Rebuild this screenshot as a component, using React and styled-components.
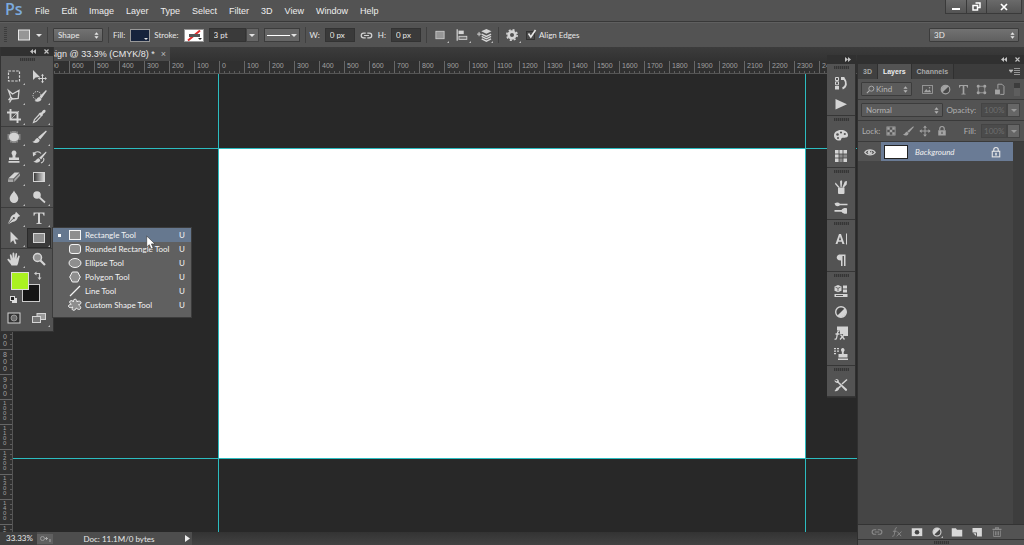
import React, { useState } from "react";
import styled, { createGlobalStyle, css } from "styled-components";

const icons = {
  marquee: (
    <rect x="2.5" y="3" width="11" height="10" fill="none" stroke="currentColor" strokeWidth="1.2" strokeDasharray="2.600 1.200" />
  ),
  move: (
    <>
      <path d="M2 2v10l2.600-2.400L9 9z" fill="currentColor" />
      <path d="M11.500 7v7M8 10.500h7" stroke="currentColor" strokeWidth="1" />
      <path d="M11.500 5.800l1.500 2h-3zM11.500 15.200l1.500-2h-3zM6.800 10.500l2-1.500v3zM16 10.500L14 9v3z" fill="currentColor" />
    </>
  ),
  lasso: (
    <path d="M2.500 2.500l4 3.500 6.500-3.500-.8 8-5.700.5-1.800-2.200L2.500 2.500zM4.800 9.200L3 11.500l2 .5-1.500 2.500M5 11l3 .2" fill="none" stroke="currentColor" strokeWidth="1.300" />
  ),
  quickSelect: (
    <>
      <circle cx="6" cy="7.500" r="4" fill="none" stroke="currentColor" strokeDasharray="1.300 1" />
      <path d="M15 2L8.500 8.500l2 2L15.800 3zM8.500 9c-2.500 0-2.500 3-5 3.800 2.500 1.800 6.500 1 7-1.800z" fill="currentColor" />
    </>
  ),
  crop: (
    <>
      <path d="M4.500 1v10.500H15M1 4.500h10.500V15" fill="none" stroke="currentColor" strokeWidth="1.900" />
      <path d="M5 11L13 3" stroke="currentColor" strokeWidth=".7" />
    </>
  ),
  dropper: (
    <>
      <path d="M8.800 4.800l1.500-.2 1.700-2.300c1.800-1.500 3.600.2 2 2.100L11.900 6l-.2 1.600-1.200 1.200-3-2.800z" fill="currentColor" />
      <path d="M8.300 6.500L3.500 11.500l-1 3 2.800-1.200 4.600-4.900" fill="none" stroke="currentColor" strokeWidth="1.200" />
    </>
  ),
  patch: (
    <>
      <ellipse cx="8" cy="8" rx="5" ry="4.200" fill="currentColor" />
      <path d="M5 2.500v11M7 2v12M9 2v12M11 2.500v11M1.500 6h13M1.500 8h13M1.500 10h13" stroke="currentColor" strokeWidth=".8" />
    </>
  ),
  brush: (
    <path d="M15 1.500L7 8.200l2.200 2.200L15.800 2.500zM6.800 9c-2.600 0-2.300 3.400-5.500 3.700 2.600 2.200 7.200 1.400 7.400-1.800z" fill="currentColor" />
  ),
  stamp: (
    <path d="M8 1.500a2.500 2.500 0 0 1 2 4c-.7 1-.6 2-.5 3H13v2.500H3V8.500h3.500c.1-1 .2-2-.5-3a2.500 2.500 0 0 1 2-4zM2.500 12h11v1.700h-11z" fill="currentColor" />
  ),
  historyBrush: (
    <>
      <path d="M15 2.500L8.200 8.700l1.900 1.700L15.500 3.500zM7.800 9.300c-2.500 0-2.300 3-5.500 3.300 2.400 1.900 6.600 1.200 7-1.700z" fill="currentColor" />
      <path d="M2.500 4.500c3-2.500 6-2 7.500 0M12.500 9c1 2 0 4-2.500 5" fill="none" stroke="currentColor" strokeWidth="1.100" />
      <path d="M2 7.500L1.800 3 5.500 5z" fill="currentColor" />
    </>
  ),
  eraser: (
    <>
      <path d="M8.500 3.500h5l-6 6H2.200z" fill="currentColor" />
      <path d="M14 4.200v2.500l-5.800 6.300v-3zM2 10.200h5.300V13H2z" fill="#a4a4a4" />
    </>
  ),
  gradient: (
    <>
      <defs>
        <linearGradient id="toolGradient">
          <stop offset="0" stopColor="#333" />
          <stop offset="1" stopColor="#ddd" />
        </linearGradient>
      </defs>
      <rect x="2.500" y="3.500" width="11" height="9" fill="url(#toolGradient)" stroke="currentColor" />
    </>
  ),
  drop: (
    <path d="M8 1.500c1 2.500 4.300 5 4.300 8.100a4.300 4.300 0 0 1-8.600 0C3.700 6.500 7 4 8 1.500z" fill="currentColor" />
  ),
  dodge: (
    <>
      <circle cx="6" cy="6" r="3.800" fill="currentColor" />
      <path d="M8.500 8.500l5.500 5" stroke="currentColor" strokeWidth="1.700" />
    </>
  ),
  pen: (
    <>
      <path d="M10 1.800l4.200 4.200-2.200 1c-.8 3-2.500 4.500-5.500 5L2 14.300l5-5-.6-.6-4.700 5L4 9.500C4.500 6.500 6 4.800 9 4z" fill="currentColor" />
      <circle cx="7.800" cy="8.200" r="1.100" fill="#535353" />
    </>
  ),
  type: (
    <path d="M2.500 2.500h11v3.300h-.9c-.3-1.600-.8-2.200-2.200-2.200H9v8.600c0 .8.4 1 1.600 1v.8H5.400v-.8c1.200 0 1.600-.2 1.600-1V3.600H5.600c-1.400 0-1.900.6-2.200 2.200h-.9z" fill="currentColor" />
  ),
  select: <path d="M4.500 1.500v11.200l2.700-2.500 1.700 4 1.600-.7-1.700-3.900h3.700z" fill="currentColor" />,
  rect: (
    <rect x="2.500" y="3.500" width="11" height="9" fill="#8e8e8e" stroke="currentColor" />
  ),
  hand: (
    <path d="M5.500 14.500C4.500 12.500 3 11 1.500 9c-.5-1 .8-1.700 1.700-.8l1.500 1.300L3.800 4c0-1 1.300-1.200 1.600-.2L6.500 7.500V2.500c0-1.200 1.700-1.200 1.800 0l.3 4.800.9-4.500c.3-1.100 1.700-.9 1.600.2l-.4 4.900 1.500-3c.5-.9 1.800-.4 1.500.6-.8 2.500-.9 6-2.500 9z" fill="currentColor" />
  ),
  zoom: (
    <>
      <circle cx="6.500" cy="6.500" r="4" fill="#929292" stroke="currentColor" strokeWidth="1.500" />
      <path d="M9.500 9.500l4.500 4.500" stroke="currentColor" strokeWidth="2.200" />
    </>
  ),
  quickMask: (
    <>
      <rect x="2" y="3" width="12" height="10" fill="#333" stroke="currentColor" />
      <circle cx="8" cy="8" r="3" fill="#6c6c6c" stroke="#aaa" strokeWidth=".8" />
    </>
  ),
  screenMode: (
    <>
      <rect x="6" y="3.500" width="8.500" height="6" fill="#999" stroke="currentColor" />
      <rect x="1.500" y="6.500" width="8" height="6" fill="#777" stroke="currentColor" />
    </>
  ),
  rounded: (
    <rect x="2.500" y="3.500" width="11" height="9" rx="2.500" fill="#8e8e8e" stroke="currentColor" />
  ),
  ellipse: <ellipse cx="8" cy="8" rx="6" ry="4.500" fill="#8e8e8e" stroke="currentColor" />,
  polygon: <path d="M5.300 3h5.400l2.600 5-2.600 5H5.300L2.700 8z" fill="#8e8e8e" stroke="currentColor" />,
  line: <path d="M3 13L13 3" stroke="currentColor" strokeWidth="1.300" />,
  custom: (
    <path d="M7 2.500c2-1 3 .5 2.800 2.200 1.700-1 4.200-.8 4.200 1 0 1.500-1.500 1.800-2.500 2 1 1 3 2.500 2 4s-3 .5-4.200-.7c-.6 1.500-2 3-3.600 2-1.200-.8-.3-2.200.2-3-1.500.8-3.800 1-4.400-.5C1 8 3 7.500 4.300 7.200 3 6.500 2 5 3.200 4s2.800.2 3.400 1C6.500 4 6 3 7 2.500z" fill="#8e8e8e" stroke="currentColor" />
  ),
  history: (
    <>
      <path d="M2.500 2.500h3v3h-3zM2.500 6.800h3v3h-3z" fill="none" stroke="currentColor" />
      <path d="M2 11h4v3.500H2zM8 2h3.500v3H8z" fill="currentColor" />
      <path d="M9.500 13.500c4-1.500 4.500-6 1.500-10" fill="none" stroke="currentColor" strokeWidth="1.900" />
    </>
  ),
  play: <path d="M2.500 3v10.500L14 8.200z" fill="currentColor" />,
  palette: (
    <>
      <path d="M8 3C4 3 1 5.300 1 8.500S3.800 14 7 13.500c1.500-.2.800-1.700 1.800-2.500 1.500-1 6.200 1 6.200-3C15 5 12 3 8 3z" fill="currentColor" />
      <circle cx="4.500" cy="7.500" r="1.300" fill="#535353" />
      <circle cx="8" cy="5.500" r="1.100" fill="#535353" />
      <circle cx="11.800" cy="7" r="1.100" fill="#535353" />
      <circle cx="5" cy="11" r="1" fill="#535353" />
    </>
  ),
  swatches: (
    <>
      <rect x="2" y="2" width="12" height="12" fill="currentColor" />
      <path d="M6 6h4v4H6zM10 6h4v4h-4zM6 10h4v4H6z" fill="#8a8a8a" />
      <path d="M6 2v12M10 2v12M2 6h12M2 10h12" stroke="#484848" strokeWidth=".8" />
    </>
  ),
  brushes: (
    <path d="M5 8.500h6.500V14a1 1 0 0 1-1 1H6a1 1 0 0 1-1-1zM6.500 8L2.500 3.500 2 5l3.500 4zM7.500 8L7 2.500 8.200 1l1 1.500L8.700 8zM9.500 8l2.300-5.500L14 2l-.3 3.500-3 3z" fill="currentColor" />
  ),
  presets: (
    <path d="M1.500 3.500c2.500-1.500 4-1 5.500.2h7.500v1.600H7c-1.500 1-3 1.200-4.500.2zM1.500 10h7c1.500-2 4-2.300 5.500-1.500v5c-1.500.8-4 .3-5.500-1.700h-7z" fill="currentColor" />
  ),
  character: (
    <>
      <path d="M6 3h2l3.500 10H9.400l-.7-2.200H5.200L4.500 13H2.500zM7 5.500L5.800 9.200h2.400z" fill="currentColor" fillRule="evenodd" />
      <path d="M13.500 2.500v11" stroke="currentColor" />
    </>
  ),
  paragraph: (
    <path d="M7 2.500h5.500V14H11V4H9.500v10H8V8.500C2.500 9 2.500 2.500 7 2.500z" fill="currentColor" />
  ),
  threeD: (
    <>
      <path d="M5 2l3.500 1.500v4.200L5 9.300 1.500 7.700V3.500zM10 2.500h4v3h-4zM10 6.500h4v3h-4zM1.500 11h13v3h-13z" fill="currentColor" />
      <path d="M2.500 4.200L5 5.300l2.500-1.100M5 5.300v3" stroke="#535353" fill="none" strokeWidth=".8" />
      <path d="M3 12.500h7" stroke="#535353" />
    </>
  ),
  adjust: (
    <>
      <circle cx="8" cy="8" r="5.300" fill="#484848" stroke="currentColor" strokeWidth="1.400" />
      <path d="M4.200 11.800a5.400 5.400 0 0 1 7.600-7.600z" fill="currentColor" />
    </>
  ),
  adjustDark: (
    <>
      <circle cx="8" cy="8" r="5.300" fill="#484848" stroke="currentColor" strokeWidth="1.400" />
      <path d="M4.200 11.800a5.400 5.400 0 0 0 7.600-7.600z" fill="currentColor" />
    </>
  ),
  fxBox: (
    <>
      <path d="M4 1.500h11V11h-3.500L9.500 9H7V5.500H4z" fill="currentColor" />
      <path d="M6.500 6.200C4.500 5.500 4.500 8 4 11s-.8 3.500-2.500 3M2.500 9h4M7.500 9.500l4 5M11.500 9.500l-4.500 5" stroke="currentColor" fill="none" strokeWidth="1.300" />
    </>
  ),
  cloneSource: (
    <path d="M9.500 2a2 2 0 0 1 1.600 3.300c-.6.900-.4 1.800-.3 2.700h3.700v3.500h-9V8h3.300c.1-.9.3-1.800-.3-2.700A2 2 0 0 1 9.500 2zM5 12.500h10V14H5zM1 2h2v1.300H1zM4 2h2v1.300H4zM1 4.500h2v1.300H1zM4 4.500h2v1.300H4zM1 7h2v1.300H1z" fill="currentColor" />
  ),
  toolPresets: (
    <path d="M2.200 2.200c2-.8 4 .7 3.700 2.700L13.800 12c1 1-.6 2.600-1.600 1.600L4.900 6C3 6.300 1.200 4.700 1.600 3l1.900 1.500 1-1zM14.500 3L9.500 7.500 8.500 6.500 13.500 2zM7 8.500l1.200 1.200-2 1.800c-.7 2.200-2.700 3.300-4.700 2.500 1.500-1 1.200-3.500 3.700-3.800z" fill="currentColor" />
  ),
  link: (
    <path d="M7 5H4.500a3 3 0 0 0 0 6H7M9 5h2.500a3 3 0 0 1 0 6H9M5 8h6" fill="none" stroke="currentColor" strokeWidth="1.500" />
  ),
  square: <rect x="2.500" y="3" width="11" height="10" fill="#969696" stroke="currentColor" />,
  align: (
    <>
      <path d="M2.500 1.500v13" stroke="currentColor" strokeWidth="1.400" />
      <rect x="4" y="3" width="6" height="4" fill="currentColor" />
      <rect x="4.500" y="9.500" width="9" height="3.500" fill="#777" stroke="currentColor" />
    </>
  ),
  arrange: (
    <>
      <path d="M10 1l5.500 2.500L10 6 4.500 3.500z" fill="currentColor" />
      <path d="M5 6.500L10 9l5-2.500M5 9l5 2.500L15 9M5 11.500L10 14l5-2.500" fill="none" stroke="currentColor" strokeWidth="1.500" />
      <path d="M0 6.500h4.500M2.200 4.200v4.600" stroke="currentColor" />
    </>
  ),
  gear: (
    <>
      <circle cx="8" cy="8" r="3.800" fill="none" stroke="currentColor" strokeWidth="3" />
      <circle cx="8" cy="8" r="5.900" fill="none" stroke="currentColor" strokeWidth="1.800" strokeDasharray="2.350 2.280" />
    </>
  ),
  image: (
    <>
      <rect x="2" y="3" width="12" height="10" fill="none" stroke="currentColor" />
      <path d="M3.500 11.500l3-4 2 2.200L10.500 8l2 3.500z" fill="currentColor" />
      <circle cx="10.500" cy="5.800" r="1" fill="currentColor" />
    </>
  ),
  path: (
    <>
      <path d="M4 2v12M12 2v12M2 4h12M2 12h12" stroke="currentColor" />
      <path d="M2.500 2.500h3v3h-3zM10.500 2.500h3v3h-3zM2.500 10.500h3v3h-3zM10.500 10.500h3v3h-3z" fill="currentColor" />
    </>
  ),
  smart: (
    <>
      <path d="M6 1.500h5L13.500 4v10H9M6 1.500V7" fill="none" stroke="currentColor" strokeWidth="1.200" />
      <rect x="2.500" y="8" width="6" height="6" fill="currentColor" />
    </>
  ),
  checker: (
    <>
      <rect x="2.500" y="2.500" width="11" height="11" fill="none" stroke="currentColor" />
      <path d="M3 3h3.300v3.300H3zM9.700 3H13v3.300H9.700zM6.300 6.300h3.400v3.400H6.300zM3 9.700h3.300V13H3zM9.700 9.700H13V13H9.700z" fill="currentColor" />
    </>
  ),
  fourWay: (
    <>
      <path d="M8 3v10M3 8h10" stroke="currentColor" strokeWidth="1.300" />
      <path d="M8 .5l2.500 3h-5zM8 15.500l2.500-3h-5zM.5 8l3-2.500v5zM15.500 8l-3-2.500v5z" fill="currentColor" />
    </>
  ),
  lock: (
    <>
      <path d="M5 7V5a3 3 0 0 1 6 0v2" fill="none" stroke="currentColor" strokeWidth="1.500" />
      <rect x="3" y="7" width="10" height="7" fill="currentColor" />
      <path d="M8 9v3" stroke="#555" strokeWidth="1.500" />
    </>
  ),
  lockOutline: (
    <>
      <path d="M5 7V5a3 3 0 0 1 6 0v2" fill="none" stroke="currentColor" strokeWidth="1.500" />
      <rect x="3" y="7" width="10" height="7.500" fill="none" stroke="currentColor" strokeWidth="1.400" />
      <path d="M8 9v3.500" stroke="currentColor" strokeWidth="2" />
    </>
  ),
  eye: (
    <>
      <path d="M1 8.500C4 4 12 4 15 8.500 12 13 4 13 1 8.500z" fill="none" stroke="currentColor" strokeWidth="1.500" />
      <circle cx="8" cy="8.300" r="3" fill="currentColor" />
      <circle cx="9" cy="7.500" r=".9" fill="#444" />
    </>
  ),
  search: (
    <>
      <circle cx="9.500" cy="6.500" r="4.500" fill="none" stroke="currentColor" strokeWidth="1.500" />
      <path d="M6 10l-4.500 4.500" stroke="currentColor" strokeWidth="1.800" />
    </>
  ),
  fx: (
    <path d="M8 2.500C5.500 1.500 5.500 4.500 5 8s-1 6.500-3.500 5.500M2.500 7h5M8.500 7.500l5 6M14 7.500l-6.500 6" stroke="currentColor" fill="none" strokeWidth="1.300" />
  ),
  mask: (
    <>
      <rect x="1" y="3" width="14" height="10.500" fill="currentColor" />
      <circle cx="8" cy="8.200" r="3" fill="#444" />
    </>
  ),
  folder: <path d="M1 3h5.500l1.500 2h7v9H1z" fill="currentColor" />,
  newLayer: (
    <path d="M2 2.500h12.500V14H8V8.500H2zM3 9.700h3.800v3.600z" fill="currentColor" />
  ),
  trash: (
    <>
      <path d="M2 4.500h12M6 4V2.500h4V4" fill="none" stroke="currentColor" strokeWidth="1.400" />
      <path d="M3.500 6v8h9V6M6 7v5.500M8 7v5.500M10 7v5.500" fill="none" stroke="currentColor" strokeWidth="1.200" />
    </>
  ),
};

const Icon = ({ name, size = 16 }) => (
  <svg width={size} height={size} viewBox="0 0 16 16" aria-hidden="true">
    {icons[name]}
  </svg>
);

const menus = ["File", "Edit", "Image", "Layer", "Type", "Select", "Filter", "3D", "View", "Window", "Help"];

const toolGroups = [
  ["marquee", "move", "lasso", "quickSelect", "crop", "dropper"],
  ["patch", "brush", "stamp", "historyBrush", "eraser", "gradient", "drop", "dodge"],
  ["pen", "type", "select", "rect"],
  ["hand", "zoom"],
];

const noCorner = ["move", "zoom", "quickMask"];

const shapeTools = [
  { icon: "rect", label: "Rectangle Tool" },
  { icon: "rounded", label: "Rounded Rectangle Tool" },
  { icon: "ellipse", label: "Ellipse Tool" },
  { icon: "polygon", label: "Polygon Tool" },
  { icon: "line", label: "Line Tool" },
  { icon: "custom", label: "Custom Shape Tool" },
];

const dockGroups = [
  ["history", "play"],
  ["palette", "swatches"],
  ["brushes", "presets"],
  ["character", "paragraph"],
  ["threeD", "adjustDark", "fxBox", "cloneSource"],
  ["toolPresets"],
];

// ruler marks, in document pixels
const columns = Array.from({ length: 33 }, (_, i) => Math.abs((i - 8) * 100));
const rows = Array.from({ length: 19 }, (_, i) => Math.abs((i - 3) * 100));

const Dropdown = ({ label, options, $width, $dim, children }) => (
  <SelectWrap $width={$width} $dim={$dim}>
    {children}
    <Select aria-label={label} $indent={Boolean(children)}>
      {options.map((option) => (
        <option key={option}>{option}</option>
      ))}
    </Select>
    <Arrows viewBox="0 0 6 8" aria-hidden="true">
      <path d="M3 0l2.500 3h-5zM3 8l2.500-3h-5z" fill="currentColor" />
    </Arrows>
  </SelectWrap>
);

const App = () => {
  const [alignEdges, setAlignEdges] = useState(true);
  const [shape, setShape] = useState("Rectangle Tool");

  return (
    <Window>
      <GlobalStyle />
      <MenuBar>
        <Logo>Ps</Logo>
        <Menus>
          {menus.map((menu) => (
            <MenuButton key={menu}>{menu}</MenuButton>
          ))}
        </Menus>
        <WindowButtons>
          <WindowButton aria-label="Minimize">
            <svg width="8" height="8" viewBox="0 0 8 8">
              <path d="M0 6h8" stroke="#fff" strokeWidth="2" />
            </svg>
          </WindowButton>
          <WindowButton aria-label="Restore">
            <svg width="9" height="9" viewBox="0 0 9 9">
              <path d="M3.500 1h4.500v4.500H6M1 3.500h4.500V8H1z" fill="none" stroke="#fff" strokeWidth="1.500" />
            </svg>
          </WindowButton>
          <WindowButton aria-label="Close" $wide>
            <svg width="8" height="8" viewBox="0 0 8 8">
              <path d="M1 1l6 6M7 1L1 7" stroke="#fff" strokeWidth="1.700" />
            </svg>
          </WindowButton>
        </WindowButtons>
      </MenuBar>

      <OptionsBar>
        <BarGrip />
        <PresetButton aria-label="Tool preset">
          <Icon name="square" />
          <Caret />
        </PresetButton>
        <Divider />
        <Dropdown label="Tool mode" options={["Shape", "Path", "Pixels"]} $width={50} />
        <Divider />
        <OptionLabel as="span">Fill:</OptionLabel>
        <Swatch aria-label="Fill colour">
          <Caret $small />
        </Swatch>
        <OptionLabel as="span">Stroke:</OptionLabel>
        <Swatch aria-label="Stroke colour" $none>
          <svg width="18" height="11" viewBox="0 0 18 11">
            <path d="M3 10.500L15 .5" stroke="#e02c2c" strokeWidth="2" />
            <path d="M4 4h11v3H4z" fill="#555" />
          </svg>
          <Caret $small $dark />
        </Swatch>
        <Combo>
          <Field aria-label="Stroke width" defaultValue="3 pt" $width={37} />
          <ComboButton aria-label="Stroke width options">
            <Caret />
          </ComboButton>
        </Combo>
        <LineStyle aria-label="Stroke type">
          <Stroke />
          <Caret />
        </LineStyle>
        <Divider />
        <OptionLabel htmlFor="shape-width">W:</OptionLabel>
        <Field id="shape-width" defaultValue="0 px" $width={30} />
        <IconButton aria-label="Link width and height" $narrow>
          <Icon name="link" size={13} />
        </IconButton>
        <OptionLabel htmlFor="shape-height">H:</OptionLabel>
        <Field id="shape-height" defaultValue="0 px" $width={30} />
        <Divider />
        <IconButton aria-label="Path operations" $corner>
          <Icon name="square" size={12} />
        </IconButton>
        <IconButton aria-label="Path alignment" $corner>
          <Icon name="align" size={14} />
        </IconButton>
        <IconButton aria-label="Path arrangement" $corner>
          <Icon name="arrange" size={15} />
        </IconButton>
        <Divider />
        <IconButton aria-label="Geometry options" $corner>
          <Icon name="gear" size={14} />
        </IconButton>
        <CheckLabel>
          <Checkbox
            type="checkbox"
            checked={alignEdges}
            onChange={(e) => setAlignEdges(e.target.checked)}
          />
          {alignEdges && (
            <Tick viewBox="0 0 10 10" aria-hidden="true">
              <path d="M2 4.500L4.300 8 9 1" fill="none" stroke="#e6e6e6" strokeWidth="1.600" />
            </Tick>
          )}
          Align Edges
        </CheckLabel>
        <Spacer />
        <Dropdown label="Workspace" options={["3D", "Essentials"]} $width={90} />
      </OptionsBar>

      <Workspace>
        <Document>
          <TabStrip>
            <DocumentTab>
              Design @ 33.3% (CMYK/8) *
              <CloseTab aria-label="Close document">×</CloseTab>
            </DocumentTab>
          </TabStrip>
          <RulerTop>
            {columns.map((mark, i) => (
              <ColumnMark key={i}>{mark}</ColumnMark>
            ))}
          </RulerTop>
          <View>
            <RulerLeft>
              {rows.map((mark, i) => (
                <RowMark key={i} $long={mark > 999}>
                  {String(mark)
                    .split("")
                    .map((digit, j) => (
                      <span key={j}>{digit}</span>
                    ))}
                </RowMark>
              ))}
            </RulerLeft>
            <Pasteboard>
              <Artboard>
                <Guide $side="top" />
                <Guide $side="bottom" />
                <Guide $side="left" $vertical />
                <Guide $side="right" $vertical />
              </Artboard>
            </Pasteboard>
          </View>
          <StatusBar>
            <ZoomLevel>33.33%</ZoomLevel>
            <StatusInfo>
              <StatusIcon>
                <svg width="13" height="7" viewBox="0 0 13 7">
                  <circle cx="3.500" cy="3.500" r="2" fill="none" stroke="#999" />
                  <path d="M7.500 2v3M6 3.500h3M11 4v3" stroke="#aaa" />
                </svg>
              </StatusIcon>
              <span>Doc: 11.1M/0 bytes</span>
              <StatusButton aria-label="Status options">
                <svg width="5" height="7" viewBox="0 0 5 7">
                  <path d="M0 0v7l5-3.500z" fill="#eee" />
                </svg>
              </StatusButton>
            </StatusInfo>
          </StatusBar>

          <Dock>
            <PanelHeader>
              <Chevrons $right />
            </PanelHeader>
            {dockGroups.map((group) => (
              <DockGroup key={group[0]}>
                <Grip />
                {group.map((name) => (
                  <DockButton key={name} aria-label={name}>
                    <Icon name={name} />
                  </DockButton>
                ))}
              </DockGroup>
            ))}
          </Dock>
        </Document>

        <Panel>
          <PanelHeader>
            <Chevrons />
            <Cross />
          </PanelHeader>
          <Tabs>
            <Tab>3D</Tab>
            <Tab $active>Layers</Tab>
            <Tab>Channels</Tab>
            <PanelMenu aria-label="Panel menu">
              <svg width="11" height="7" viewBox="0 0 11 7">
                <path d="M0 2h4L2 4.500zM5 .5h6M5 2.500h6M5 4.500h6M5 6.500h6" fill="#bbb" stroke="#bbb" strokeWidth=".7" />
              </svg>
            </PanelMenu>
          </Tabs>
          <PanelRow>
            <Dropdown label="Filter type" options={["Kind", "Name"]} $width={51} $dim>
              <SearchMark>
                <Icon name="search" size={9} />
              </SearchMark>
            </Dropdown>
            <Filters>
              {["image", "adjust", "type", "path", "smart"].map((name) => (
                <SmallButton key={name} aria-label={"Filter " + name}>
                  <Icon name={name} size={13} />
                </SmallButton>
              ))}
            </Filters>
            <Toggle aria-label="Toggle filter" />
          </PanelRow>
          <PanelRow>
            <Dropdown label="Blend mode" options={["Normal", "Multiply"]} $width={82} $dim />
            <RowLabel htmlFor="opacity">Opacity:</RowLabel>
            <Combo>
              <Field id="opacity" defaultValue="100%" $width={26} $dim />
              <ComboButton aria-label="Opacity options">
                <Caret $faint />
              </ComboButton>
            </Combo>
          </PanelRow>
          <PanelRow>
            <LockTools>
              Lock:
              {["checker", "brush", "fourWay", "lock"].map((name) => (
                <SmallButton key={name} aria-label={"Lock " + name}>
                  <Icon name={name} size={12} />
                </SmallButton>
              ))}
            </LockTools>
            <RowLabel htmlFor="fill">Fill:</RowLabel>
            <Combo>
              <Field id="fill" defaultValue="100%" $width={26} $dim />
              <ComboButton aria-label="Fill options">
                <Caret $faint />
              </ComboButton>
            </Combo>
          </PanelRow>
          <LayerArea>
            <LayerList>
              <LayerRow>
                <Visibility aria-label="Toggle visibility">
                  <Icon name="eye" size={12} />
                </Visibility>
                <Layer>
                  <Thumbnail />
                  <LayerName>Background</LayerName>
                  <Icon name="lockOutline" size={12} />
                </Layer>
              </LayerRow>
            </LayerList>
            <ScrollTrack />
          </LayerArea>
          <PanelFooter>
            {["link", "fx", "mask", "adjust", "folder", "newLayer", "trash"].map((name) => (
              <FooterButton
                key={name}
                aria-label={name}
                $off={["link", "fx", "trash"].includes(name)}
                $corner={name === "adjust"}
              >
                <Icon name={name} size={12} />
              </FooterButton>
            ))}
          </PanelFooter>
          <PanelEdge>
            <Grip />
          </PanelEdge>
        </Panel>

        <Toolbox>
          <PanelHeader>
            <Chevrons />
            <Cross />
          </PanelHeader>
          <ToolGrip>
            <Grip />
          </ToolGrip>
          {toolGroups.map((group) => (
            <ToolGroup key={group[0]}>
              {group.map((name) => (
                <ToolSlot key={name}>
                  <ToolButton aria-label={name} $active={name === "rect"} $corner={!noCorner.includes(name)}>
                    <Icon name={name} />
                  </ToolButton>
                  {name === "rect" && (
                    <Flyout>
                      {shapeTools.map((tool) => (
                        <FlyoutItem
                          key={tool.label}
                          $active={tool.label === shape}
                          onClick={() => setShape(tool.label)}
                        >
                          <Bullet $on={tool.label === shape} />
                          <Icon name={tool.icon} />
                          <FlyoutName>{tool.label}</FlyoutName>
                          <span>U</span>
                        </FlyoutItem>
                      ))}
                      <Pointer viewBox="0 0 10 15" aria-hidden="true">
                        <path d="M.7 1v11l2.600-2.300L5 14l2.200-.9-1.800-4.200H9z" fill="#fff" stroke="#333" strokeWidth=".6" />
                      </Pointer>
                    </Flyout>
                  )}
                </ToolSlot>
              ))}
            </ToolGroup>
          ))}
          <Colors viewBox="0 0 52 39" role="img" aria-label="Foreground and background colours">
            <rect x="21.500" y="15.500" width="17" height="17" fill="#151515" stroke="#ccc" />
            <rect x="10.500" y="3.500" width="17" height="17" fill="#aaf222" stroke="#ddd" />
            <path d="M35 4.500h3.500V9" fill="none" stroke="#ccc" strokeWidth="1.200" />
            <path d="M33 4.500l2.500-2v4zM38.500 11l2-2.500h-4z" fill="#ccc" />
            <rect x="11.500" y="29.500" width="4" height="4" fill="#ddd" stroke="#ddd" />
            <rect x="9.500" y="27.500" width="4" height="4" fill="#222" stroke="#ddd" />
          </Colors>
          <ToolGroup>
            {["quickMask", "screenMode"].map((name) => (
              <ToolSlot key={name}>
                <ToolButton aria-label={name} $corner={!noCorner.includes(name)}>
                  <Icon name={name} />
                </ToolButton>
              </ToolSlot>
            ))}
          </ToolGroup>
        </Toolbox>
      </Workspace>
    </Window>
  );
};

export default App;

const GlobalStyle = createGlobalStyle`
  * {
    box-sizing: border-box;
  }
  body {
    margin: 0;
    background: #282828;
  }
  button, input, select {
    margin: 0;
    padding: 0;
    border: 0;
    background: none;
    color: inherit;
    font: inherit;
  }
  svg {
    display: block;
    flex-shrink: 0;
  }
`;

const Window = styled.div`
  display: flex;
  flex-direction: column;
  height: 100vh;
  min-height: 420px;
  overflow: hidden;
  color: #e8e8e8;
  font-family: Lato, "Liberation Sans", sans-serif;
  font-size: 8px;
  line-height: 12px;
`;

// menu bar
const MenuBar = styled.header`
  display: flex;
  align-items: center;
  height: 22px;
  flex-shrink: 0;
  padding-left: 5px;
  background: #535353;
  border-bottom: 1px solid #383838;
`;

const Logo = styled.div`
  align-self: flex-start;
  width: 23px;
  color: #7cabde;
  font-family: "Open Sans", sans-serif;
  font-size: 16px;
  font-weight: 600;
  line-height: 19px;
`;

const Menus = styled.nav`
  display: flex;
  gap: 12px;
  padding-left: 7px;
`;

const MenuButton = styled.button`
  color: #eee;
  font-family: "Liberation Sans", sans-serif;
  font-size: 9px;
`;

const WindowButtons = styled.div`
  display: flex;
  align-self: flex-start;
  margin: 0 2px 0 auto;
  border: 1px solid #3a3a3a;
  border-top: 0;
`;

const WindowButton = styled.button`
  display: grid;
  place-items: center;
  width: ${(props) => (props.$wide ? "35px" : "20px")};
  height: 13px;
  background: linear-gradient(#6a6a6a, #545454);

  & + & {
    border-left: 1px solid #3a3a3a;
  }
`;

// options bar
const OptionsBar = styled.div`
  display: flex;
  align-items: center;
  gap: 5px;
  height: 25px;
  flex-shrink: 0;
  padding: 0 5px 0 4px;
  background: #535353;
  border-top: 1px solid #5f5f5f;
`;

const BarGrip = styled.div`
  width: 3px;
  height: 16px;
  background: repeating-linear-gradient(#3d3d3d 0 1px, #535353 1px 2px);
`;

const PresetButton = styled.button`
  display: flex;
  align-items: center;
  gap: 4px;
  margin-left: 4px;
`;

const Caret = styled.span`
  width: 0;
  height: 0;
  border: ${(props) => (props.$small ? "2px" : "3px")} solid transparent;
  border-top-color: ${(props) => (props.$dark ? "#222" : props.$faint ? "#999" : "#e2e2e2")};
  border-bottom-width: 0;
`;

const Divider = styled.div`
  width: 1px;
  height: 16px;
  background: #404040;
`;

const SelectWrap = styled.div`
  position: relative;
  width: ${(props) => props.$width}px;
  height: 14px;
  flex-shrink: 0;
  color: ${(props) => (props.$dim ? "#b4b4b4" : "#e8e8e8")};
  background: ${(props) => (props.$dim ? "#5b5b5b" : "linear-gradient(#727272, #606060)")};
  border: 1px solid #3c3c3c;
  border-radius: 1px;
`;

const Select = styled.select`
  display: block;
  width: 100%;
  height: 12px;
  padding: 0 8px 0 ${(props) => (props.$indent ? "14px" : "4px")};
  appearance: none;
  line-height: 12px;
`;

const Arrows = styled.svg`
  position: absolute;
  top: 3px;
  right: 3px;
  width: 5px;
  height: 7px;
  pointer-events: none;
`;

const SearchMark = styled.span`
  position: absolute;
  top: 2px;
  left: 4px;
`;

const OptionLabel = styled.label`
  margin-left: -1px;
  white-space: nowrap;
`;

const Swatch = styled.button`
  position: relative;
  display: grid;
  width: 20px;
  height: 13px;
  background: ${(props) => (props.$none ? "#fff" : "#16233c")};
  border: 1px solid #999;

  & > span {
    position: absolute;
    right: 1px;
    bottom: 1px;
  }
`;

const Combo = styled.div`
  display: flex;
`;

const Field = styled.input`
  width: ${(props) => props.$width}px;
  height: 14px;
  padding: 0 0 0 ${(props) => (props.$dim ? "2px" : "4px")};
  color: ${(props) => (props.$dim ? "#6e6e6e" : "#e8e8e8")};
  background: ${(props) => (props.$dim ? "#4b4b4b" : "#3a3a3a")};
  border: 1px solid ${(props) => (props.$dim ? "#444" : "#333")};
`;

const ComboButton = styled.button`
  display: grid;
  place-items: center;
  width: 13px;
  height: 14px;
  background: #666;
  border: 1px solid #444;
`;

const LineStyle = styled.button`
  display: flex;
  align-items: center;
  gap: 1px;
  width: 36px;
  height: 14px;
  padding: 0 2px;
  background: #666;
  border: 1px solid #3c3c3c;
`;

const Stroke = styled.span`
  flex: 1;
  height: 1px;
  background: #fff;
`;

const cornerMark = css`
  &::after {
    content: "";
    position: absolute;
    right: 0;
    bottom: 0;
    border: 1px solid #bbb;
    border-top-color: transparent;
    border-left-color: transparent;
  }
`;

const IconButton = styled.button`
  position: relative;
  display: grid;
  place-items: center;
  width: ${(props) => (props.$narrow ? "14px" : "17px")};
  height: 16px;
  color: #d4d4d4;
  ${(props) => props.$corner && cornerMark}
`;

const CheckLabel = styled.label`
  position: relative;
  display: flex;
  align-items: center;
  gap: 4px;
  white-space: nowrap;
`;

const Checkbox = styled.input`
  width: 9px;
  height: 9px;
  appearance: none;
  background: #4a4a4a;
  border: 1px solid #333;
`;

const Tick = styled.svg`
  position: absolute;
  top: 0;
  left: 0;
  width: 11px;
  height: 10px;
  pointer-events: none;
`;

const Spacer = styled.div`
  flex: 1;
`;

// workspace
const Workspace = styled.main`
  position: relative;
  display: flex;
  flex: 1;
  min-height: 0;
  background: linear-gradient(#3c3c3c, #323232 14px);
`;

const Document = styled.section`
  position: relative;
  display: flex;
  flex: 1;
  flex-direction: column;
  min-width: 0;
`;

const TabStrip = styled.div`
  display: flex;
  height: 14px;
  flex-shrink: 0;
`;

const DocumentTab = styled.div`
  display: flex;
  align-items: center;
  justify-content: flex-end;
  gap: 6px;
  width: 170px;
  padding-right: 4px;
  background: #4a4a4a;
  font-family: "Liberation Sans", sans-serif;
  font-size: 9px;
  white-space: nowrap;
`;

const CloseTab = styled.button`
  color: #b8b8b8;
`;

const rulerText = css`
  color: #a0a0a0;
  font-family: "Liberation Sans", sans-serif;
  font-size: 7px;
`;

const RulerTop = styled.div`
  display: flex;
  height: 13px;
  flex-shrink: 0;
  overflow: hidden;
  padding-left: 19px;
  background: #303030;
  border-bottom: 1px solid #555;
  ${rulerText}
`;

const ColumnMark = styled.span`
  width: 25px;
  flex-shrink: 0;
  padding-left: 2px;
  border-left: 1px solid #666;
  line-height: 9px;
  background: repeating-linear-gradient(to right, transparent 0 4px, #5c5c5c 4px 5px) bottom / 100% 2px no-repeat;
`;

const View = styled.div`
  display: flex;
  flex: 1;
  min-height: 0;
`;

const RulerLeft = styled.div`
  width: 13px;
  flex-shrink: 0;
  overflow: hidden;
  background: #303030;
  border-right: 1px solid #555;
  ${rulerText}
`;

const RowMark = styled.div`
  display: flex;
  flex-direction: column;
  height: 25px;
  padding: 1px 0 0 3px;
  border-top: 1px solid #666;
  line-height: ${(props) => (props.$long ? "5px" : "7px")};
  font-size: ${(props) => (props.$long ? "6px" : "7px")};
  background: repeating-linear-gradient(transparent 0 4px, #5c5c5c 4px 5px) right / 2px 100% no-repeat;
`;

const Pasteboard = styled.div`
  display: flex;
  flex: 1;
  min-width: 0;
  overflow: hidden;
  padding: 75px 52px 74px 206px;
  background: #282828;
`;

const Artboard = styled.div`
  position: relative;
  flex: 1;
  background: #fff;
`;

const Guide = styled.span`
  position: absolute;
  ${(props) => props.$side}: -1px;
  ${(props) =>
    props.$vertical
      ? "top: -100vh; bottom: -100vh; width: 1px;"
      : "left: -100vw; right: -100vw; height: 1px;"}
  background: #2cbcc0;
`;

const StatusBar = styled.footer`
  display: flex;
  height: 13px;
  flex-shrink: 0;
  background: linear-gradient(#333, #424242);
`;

const ZoomLevel = styled.span`
  width: 37px;
  padding-left: 6px;
  background: #3f3f3f;
`;

const StatusInfo = styled.div`
  display: flex;
  align-items: center;
  justify-content: space-between;
  width: 155px;
  background: #4d4d4d;
`;

const StatusIcon = styled.span`
  display: grid;
  place-items: center;
  width: 16px;
  height: 10px;
  background: #606060;
`;

const StatusButton = styled.button`
  width: 7px;
`;

// shared panel parts
const PanelHeader = styled.div`
  display: flex;
  align-items: center;
  justify-content: flex-end;
  gap: 8px;
  height: 9px;
  flex-shrink: 0;
  padding-right: 4px;
  background: #303030;
`;

const Chevrons = ({ $right }) => (
  <svg width="6" height="5" viewBox="0 0 6 5" aria-hidden="true">
    <path
      d={$right ? "M0 0l3 2.500-3 2.500zM3 0l3 2.500-3 2.500z" : "M3 0L0 2.500 3 5zM6 0L3 2.500 6 5z"}
      fill="#c4c4c4"
    />
  </svg>
);

const Cross = () => (
  <svg width="5" height="5" viewBox="0 0 5 5" aria-hidden="true">
    <path d="M.5 .5l4 4M4.500 .5l-4 4" stroke="#c4c4c4" strokeWidth="1.200" />
  </svg>
);

const Grip = styled.div`
  width: 15px;
  height: 3px;
  margin: 0 auto;
  background: repeating-linear-gradient(to right, #363636 0 1px, #484848 1px 2px);
`;

// icon dock
const Dock = styled.aside`
  position: absolute;
  top: 8px;
  right: 1px;
  width: 29px;
  background: #535353;
  border: solid #303030;
  border-width: 0 1px 1px 0;
`;

const DockGroup = styled.div`
  padding: 2px 0 1px;
  border-bottom: 1px solid #363636;

  & > div {
    margin-bottom: 3px;
  }
`;

const DockButton = styled.button`
  display: grid;
  place-items: center;
  width: 100%;
  height: 21px;
  color: #d4d4d4;
`;

// layers panel
const Panel = styled.aside`
  display: flex;
  flex-direction: column;
  width: 167px;
  flex-shrink: 0;
  margin-top: 8px;
  background: #535353;
  border-left: 1px solid #303030;
`;

const Tabs = styled.div`
  display: flex;
  height: 15px;
  flex-shrink: 0;
  background: #3c3c3c;
`;

const Tab = styled.button`
  padding: 0 5px;
  color: ${(props) => (props.$active ? "#eee" : "#a8a8a8")};
  background: ${(props) => (props.$active ? "#535353" : "#404040")};
  border-right: 1px solid #303030;
  font-family: "Liberation Sans", sans-serif;
  font-size: 7px;
  font-weight: 700;
`;

const PanelMenu = styled.button`
  margin: 0 4px 0 auto;
`;

const PanelRow = styled.div`
  display: flex;
  align-items: center;
  justify-content: space-between;
  height: 21px;
  flex-shrink: 0;
  padding: 0 4px 0 3px;
  color: #b0b0b0;
  border-bottom: 1px solid #3a3a3a;
`;

const Filters = styled.div`
  display: flex;
  gap: 5px;
`;

const SmallButton = styled.button`
  display: grid;
  place-items: center;
  color: #a4a4a4;
`;

const Toggle = styled.button`
  width: 6px;
  height: 13px;
  background: linear-gradient(#3c3c3c 5px, #5e5e5e 5px);
`;

const RowLabel = styled.label`
  margin-left: auto;
  padding-right: 5px;
`;

const LockTools = styled.div`
  display: flex;
  gap: 5px;
  padding-left: 1px;
`;

const LayerArea = styled.div`
  display: flex;
  flex: 1;
  min-height: 0;
  background: #454545;
`;

const LayerList = styled.div`
  flex: 1;
`;

const LayerRow = styled.div`
  display: flex;
  height: 19px;
  background: #535353;
`;

const Visibility = styled.button`
  display: grid;
  place-items: center;
  width: 23px;
  color: #ccc;
`;

const Layer = styled.div`
  display: flex;
  align-items: center;
  flex: 1;
  padding: 0 11px 0 3px;
  background: #6a7b95;
`;

const Thumbnail = styled.span`
  width: 24px;
  height: 14px;
  background: #fff;
  border: 1px solid #222;
`;

const LayerName = styled.span`
  flex: 1;
  padding-left: 7px;
  color: #eee;
  font-style: italic;
`;

const ScrollTrack = styled.div`
  width: 11px;
  background: #3d3d3d;
`;

const PanelFooter = styled.div`
  display: flex;
  align-items: center;
  gap: 8px;
  height: 16px;
  flex-shrink: 0;
  padding-left: 13px;
  border: solid #333;
  border-width: 1px 0;
`;

const FooterButton = styled.button`
  position: relative;
  color: ${(props) => (props.$off ? "#8a8a8a" : "#d8d8d8")};
  ${(props) => props.$corner && cornerMark}
`;

const PanelEdge = styled.div`
  height: 5px;
  flex-shrink: 0;
  padding-top: 1px;
`;

// floating toolbox
const Toolbox = styled.aside`
  position: absolute;
  top: 0;
  left: 0;
  width: 54px;
  padding-bottom: 3px;
  background: #535353;
  border: 1px solid #333;
  border-top: 0;
`;

const ToolGrip = styled.div`
  height: 10px;
  padding-top: 2px;
`;

const ToolGroup = styled.div`
  display: flex;
  flex-wrap: wrap;
  padding: 0 1px;

  & + & {
    border-top: 1px solid #3c3c3c;
  }
`;

const ToolSlot = styled.div`
  position: relative;
  width: 50%;
`;

const ToolButton = styled.button`
  position: relative;
  display: grid;
  place-items: center;
  width: 24px;
  height: 20px;
  color: #d4d4d4;
  background: ${(props) => (props.$active ? "#3a3a3a" : "transparent")};
  border: 1px solid ${(props) => (props.$active ? "#2a2a2a" : "transparent")};
  ${(props) => props.$corner && cornerMark}
`;

const Colors = styled.svg`
  width: 52px;
  height: 39px;
`;

const Flyout = styled.div`
  position: absolute;
  top: -1px;
  left: 100%;
  width: 140px;
  padding-bottom: 5px;
  background: #606060;
  border: 1px solid #3c3c3c;
`;

const FlyoutItem = styled.button`
  display: flex;
  align-items: center;
  width: 100%;
  height: 14px;
  padding: 0 6px 0 5px;
  color: #f4f4f4;
  text-align: left;
  white-space: nowrap;
  background: ${(props) => (props.$active ? "#66788f" : "transparent")};
`;

const Bullet = styled.span`
  width: 3px;
  height: 3px;
  margin-right: 6px;
  background: ${(props) => (props.$on ? "#fff" : "transparent")};
`;

const FlyoutName = styled.span`
  flex: 1;
  padding-left: 2px;
`;

const Pointer = styled.svg`
  position: absolute;
  top: 7px;
  left: 93px;
  width: 10px;
  height: 15px;
`;
